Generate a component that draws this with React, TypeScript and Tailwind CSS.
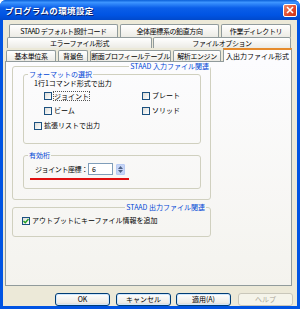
const ROW1 = [
  { w: "w-[109px]", label: "STAAD デフォルト設計コード" },
  { w: "w-[99px]", label: "全体座標系の鉛直方向" },
  { w: "w-[70px]", label: "作業ディレクトリ" },
];
const ROW2 = [
  { w: "w-[145px]", label: "エラーファイル形式" },
  { w: "w-[138px]", label: "ファイルオプション" },
];
const ROW3 = [
  { w: "w-[50px]", label: "基本単位系" },
  { w: "w-[30px]", label: "背景色" },
  { w: "w-[81px]", label: "断面プロフィールテーブル" },
  { w: "w-[48px]", label: "解析エンジン" },
];

function Tab({ w, label, tall }: { w: string; label: string; tall?: boolean }) {
  return (
    <div
      className={`${w} ${tall ? "h-[13px]" : "h-[11px]"} shrink-0 flex items-center justify-center rounded-t-[2px] border border-b-0 border-[#919b9c] bg-[linear-gradient(#ffffff,#ecebe5)] text-black leading-none whitespace-nowrap tracking-[-0.4px] overflow-hidden`}
    >
      {label}
    </div>
  );
}

function Check({ checked }: { checked?: boolean }) {
  return (
    <span className="w-[8px] h-[8px] shrink-0 border border-[#1c5180] bg-[linear-gradient(135deg,#dcdcd7,#ffffff)] flex items-center justify-center">
      {checked && (
        <svg width="6" height="6" viewBox="0 0 6 6">
          <path d="M0.5 3 L2.3 4.8 L5.5 1" stroke="#21a121" strokeWidth="1.4" fill="none" />
        </svg>
      )}
    </span>
  );
}

function Option({ label, checked, focus }: { label: string; checked?: boolean; focus?: boolean }) {
  return (
    <div className="flex items-center gap-[2px] h-[9px] whitespace-nowrap">
      <Check checked={checked} />
      <span className={focus ? "outline outline-1 outline-dotted outline-[#555] leading-[8px]" : "leading-[9px]"}>{label}</span>
    </div>
  );
}

function Button({ label, disabled }: { label: string; disabled?: boolean }) {
  return (
    <div
      className={`w-[55px] h-[13px] rounded-[3px] border flex items-center justify-center leading-none ${
        disabled
          ? "border-[#c9c7ba] bg-[#f5f4ea] text-[#aca899]"
          : "border-[#003c74] bg-[linear-gradient(#ffffff,#ecebe6_80%,#d6d0c5)] text-black shadow-[inset_0_0_0_1px_#cee7ff]"
      }`}
    >
      {label}
    </div>
  );
}

export default function App() {
  return (
    <div className="w-[300px] h-[309px] bg-[#0054e3] rounded-t-[6px] flex flex-col overflow-hidden font-['Noto_Sans_CJK_JP',sans-serif] text-[7px] text-black">
      {/* title bar */}
      <div className="h-[20px] shrink-0 flex items-center pl-[5px] pr-[3px] bg-[linear-gradient(#0a5fd8,#3d95ff_12%,#0a5ee9_40%,#0054e3_75%,#0049cc)]">
        <span className="text-white font-bold text-[8.5px] tracking-[0.4px] [text-shadow:1px_1px_0_#0a1e6a]">プログラムの環境設定</span>
        <div className="ml-auto w-[14px] h-[13px] rounded-[2px] border border-white bg-[linear-gradient(135deg,#f08b69,#e0462a_60%,#c93616)] flex items-center justify-center">
          <svg width="8" height="8" viewBox="0 0 8 8">
            <path d="M1 1 L7 7 M7 1 L1 7" stroke="white" strokeWidth="1.6" />
          </svg>
        </div>
      </div>

      {/* body */}
      <div className="flex-1 mx-[3px] mb-[3px] bg-[#ece9d8] pt-[4px] flex flex-col">
        <div className="flex gap-[2px] ml-[6px]">
          {ROW1.map((t, i) => (
            <Tab key={i} w={t.w} label={t.label} tall />
          ))}
        </div>
        <div className="flex gap-[1px] ml-[4px]">
          {ROW2.map((t, i) => (
            <Tab key={i} w={t.w} label={t.label} />
          ))}
        </div>
        <div className="flex items-end gap-[2px] ml-[3px] relative z-10">
          {ROW3.map((t, i) => (
            <Tab key={i} w={t.w} label={t.label} />
          ))}
          <div className="w-[69px] h-[14px] -mb-[1px] shrink-0 flex items-center justify-center border-x border-[#919b9c] border-t-2 border-t-[#e68b2c] bg-[#fcfcfe] leading-none whitespace-nowrap">
            入出力ファイル形式
          </div>
        </div>

        {/* panel */}
        <div className="ml-[2px] w-[287px] h-[225px] border border-[#919b9c] bg-[linear-gradient(#fcfcfe,#f4f3ee)] pl-[6px]">
          <fieldset className="w-[199px] h-[138px] border border-[#d0d0bf] rounded-[3px]">
            <legend className="ml-auto mr-0 px-[1px] text-[#0046d5] leading-[9px]">STAAD 入力ファイル関連</legend>
            <fieldset className="ml-[10px] -mt-[1px] w-[178px] h-[74px] border border-[#d0d0bf] rounded-[3px]">
              <legend className="ml-[4px] px-[1px] text-[#0046d5] leading-[8px]">フォーマットの選択</legend>
              <div className="pl-[10px] mt-[1px] leading-[9px]">1行1コマンド形式で出力</div>
              <div className="pl-[20px] mt-[3px] grid grid-cols-[98px_1fr] gap-y-[6px]">
                <Option label="ジョイント" focus />
                <Option label="プレート" />
                <Option label="ビーム" />
                <Option label="ソリッド" />
              </div>
              <div className="pl-[10px] mt-[6px]">
                <Option label="拡張リストで出力" />
              </div>
            </fieldset>
            <fieldset className="ml-[10px] mt-[7px] w-[178px] h-[38px] border border-[#d0d0bf] rounded-[3px]">
              <legend className="ml-[4px] px-[1px] text-[#0046d5] leading-[9px]">有効桁</legend>
              <div className="flex items-center mt-[3px] pl-[11px]">
                <span className="w-[53px] leading-[9px] whitespace-nowrap tracking-[-0.4px]">ジョイント座標：</span>
                <div className="w-[25px] h-[12px] border border-[#7f9db9] bg-white pl-[3px] flex items-center leading-none">6</div>
                <div className="ml-[3px] w-[9px] h-[11px] rounded-[1px] border border-[#b8cbf3] bg-[#c6d5f7] flex flex-col items-center justify-center gap-[1px]">
                  <svg width="5" height="3" viewBox="0 0 5 3">
                    <path d="M0 3 L2.5 0 L5 3 Z" fill="#4d6185" />
                  </svg>
                  <svg width="5" height="3" viewBox="0 0 5 3">
                    <path d="M0 0 L2.5 3 L5 0 Z" fill="#4d6185" />
                  </svg>
                </div>
              </div>
              <div className="ml-[6px] mt-[3px] w-[99px] h-[2px] bg-[#e01010]" />
            </fieldset>
          </fieldset>

          <fieldset className="mt-[3px] w-[199px] h-[34px] border border-[#d0d0bf] rounded-[3px]">
            <legend className="ml-auto mr-[4px] px-[1px] text-[#0046d5] leading-[9px]">STAAD 出力ファイル関連</legend>
            <div className="pl-[9px] mt-[4px]">
              <Option label="アウトプットにキーファイル情報を追加" checked />
            </div>
          </fieldset>
        </div>

        {/* buttons */}
        <div className="flex mt-[7px] ml-[52px]">
          <Button label="OK" />
          <div className="ml-[6px]">
            <Button label="キャンセル" />
          </div>
          <div className="ml-[5px]">
            <Button label="適用(A)" />
          </div>
          <div className="ml-[7px]">
            <Button label="ヘルプ" disabled />
          </div>
        </div>
      </div>
    </div>
  );
}
